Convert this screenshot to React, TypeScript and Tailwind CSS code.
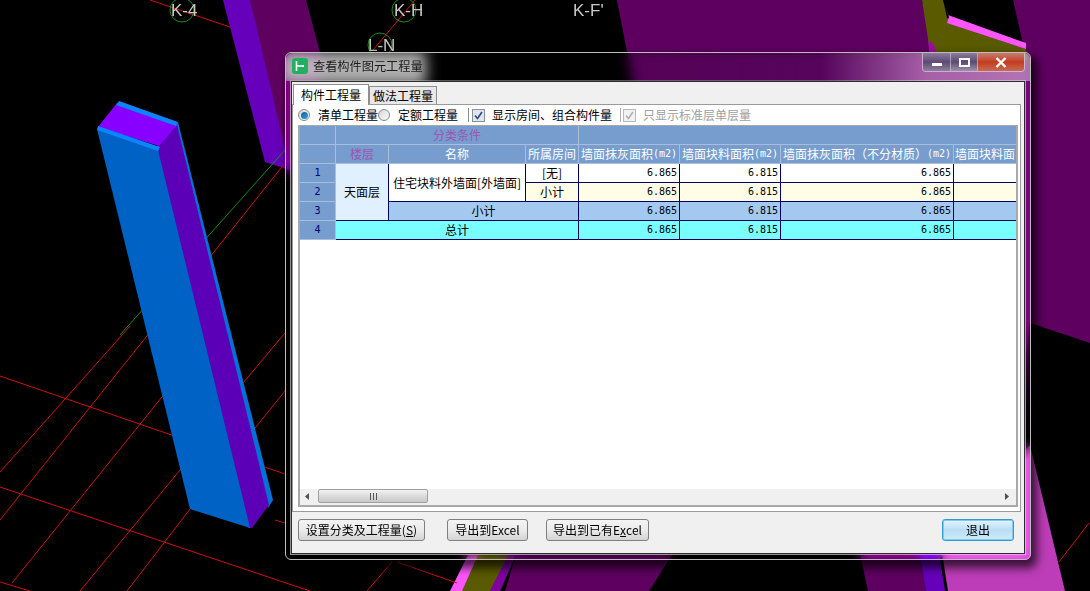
import type { ReactNode } from 'react'

const CJK = "font-['Noto_Sans_CJK_SC','Liberation_Sans',sans-serif]"
const NUM = "font-['DejaVu_Sans_Mono',monospace] text-[10px]"

const redLines = [
  [150, 0, 230, 27], [415, 0, 373, 50],
  [0, 376, 285, 474], [0, 487, 310, 591],
  [0, 472, 130, 326], [0, 520, 285, 163],
  [12, 583, 170, 387], [80, 591, 190, 458],
  [127, 591, 190, 509], [243, 383, 285, 333],
  [255, 428, 285, 391], [275, 520, 285, 523],
  [0, 582, 30, 591], [367, 591, 392, 562],
  [397, 562, 457, 583], [1089, 523, 1059, 562],
]

function Scene() {
  return (
    <svg className="absolute inset-0" width="1090" height="591" viewBox="0 0 1090 591">
      {/* 背景构件 */}
      <polygon points="250,0 306,0 322,60 300,175 283,168" fill="#5e0060" />
      <polygon points="223,0 250,0 290,170 265,162" fill="#6600bb" />
      <polygon points="617,0 922,0 932,52 1025,52 1013,0 1090,0 1090,343 1030,323 1000,560 640,120" fill="#5e0060" />
      <polygon points="922,0 943,0 947,18 1025,45 1028,60 930,52" fill="#5a5a00" />
      <polygon points="942,0 948,15 1026,43 1026,49 947,23 949,17" fill="#ff55ff" />
      <polygon points="928,41 933,43 940,60 930,60" fill="#9a109a" />
      <polygon points="1030,445 1065,591 948,591 940,540" fill="#bd3db8" />
      <polygon points="857,540 917,540 926,591 868,591" fill="#5e0060" />
      <polygon points="917,540 937,540 945,591 926,591" fill="#6600bb" />
      <polygon points="516,555 672,555 649,591 505,591" fill="#5e0060" />
      <polygon points="505,555 516,555 500,591 490,591" fill="#8000a0" />
      <polygon points="476,555 508,555 490,591 460,591" fill="#5a5a00" />
      <polygon points="468,555 478,555 462,591 450,591" fill="#ff55ff" />
      {redLines.map(([x1, y1, x2, y2], i) => (
        <line key={i} x1={x1} y1={y1} x2={x2} y2={y2} stroke="#d01010" strokeWidth="1" />
      ))}
      <line x1="120" y1="335" x2="285" y2="150" stroke="#1c8a1c" strokeWidth="1" />
      <circle cx="182" cy="10" r="12" fill="none" stroke="#1c8a1c" />
      <circle cx="404" cy="10" r="12" fill="none" stroke="#1c8a1c" />
      <circle cx="380" cy="45" r="12" fill="none" stroke="#1c8a1c" />
      {/* 蓝色墙体 */}
      <polygon points="178,122 273,500 268,508 174,126" fill="#0072d8" />
      <polygon points="155,148 177,125 269,505 252,528 248,528" fill="#5c00b8" />
      <polygon points="97,129 158,150 250,528 190,509" fill="#0062c4" />
      <polygon points="117,103 178,124 159,146 98,127" fill="#8800ff" />
      <polygon points="119,101 178,122 176,126 116,105" fill="#0a84ff" />
      <polygon points="98,126 160,147 158,151 97,130" fill="#0a84ff" />
    </svg>
  )
}

function GridLabel({ x, y, text }: { x: string; y: string; text: string }) {
  return (
    <span className={`absolute font-['Liberation_Sans',sans-serif] text-[17px] leading-none text-[#c8c8c8] ${x} ${y}`}>
      {text}
    </span>
  )
}

function Radio({ on }: { on?: boolean }) {
  return (
    <span className="flex h-[12px] w-[12px] shrink-0 items-center justify-center rounded-full border border-[#8a8a8a] bg-gradient-to-br from-[#d8d8d8] to-[#fafafa]">
      {on && <span className="h-[7px] w-[7px] rounded-full bg-gradient-to-br from-[#0f5d94] to-[#3aa2dc]" />}
    </span>
  )
}

function Check({ disabled }: { disabled?: boolean }) {
  return (
    <span
      className={`flex h-[13px] w-[13px] shrink-0 items-center justify-center border ${
        disabled ? 'border-[#b8b8b8] bg-[#f2f2f2]' : 'border-[#8e8f8f] bg-[#dfe6f0]'
      }`}
    >
      <svg width="9" height="9" viewBox="0 0 9 9" fill="none">
        <path d="M1 4.5 L3.5 7.5 L8 1" stroke={disabled ? '#b0b0b0' : '#2c4a80'} strokeWidth="1.6" />
      </svg>
    </span>
  )
}

function Head({ className = '', purple, children }: { className?: string; purple?: boolean; children?: ReactNode }) {
  return (
    <div className={`flex items-center justify-center overflow-hidden whitespace-nowrap border-b border-[#a8bedb] bg-[#769dcd] ${purple ? 'text-[#9c55b5]' : 'text-white'} ${className}`}>
      {children}
    </div>
  )
}

function RowNo({ n }: { n: number }) {
  return (
    <div className={`flex items-center justify-center border-r border-b border-[#a8bedb] bg-[#769dcd] text-[#000070] ${NUM}`}>{n}</div>
  )
}

function Cell({ className = '', children }: { className?: string; children?: ReactNode }) {
  return (
    <div className={`flex items-center justify-center overflow-hidden whitespace-nowrap border-r border-b border-[#000060] text-black ${className}`}>
      {children}
    </div>
  )
}

function Nums({ bg }: { bg: string }) {
  const vals = ['6.865', '6.815', '6.865']
  return (
    <>
      {vals.map((v, i) => (
        <div key={i} className={`flex items-center justify-end border-r border-b border-[#000060] pr-[2px] text-black ${NUM} ${bg}`}>
          {v}
        </div>
      ))}
      <div className={`border-b border-[#000060] ${bg}`} />
    </>
  )
}

function Unit() {
  return <span className={NUM}>(m2)</span>
}

function Table() {
  return (
    <div className="grid grid-cols-[36px_53px_137px_53px_101px_101px_173px_62px] grid-rows-[repeat(6,19px)] text-[12px] leading-none">
      <Head className="border-r border-r-[#a8bedb]" />
      <Head purple className="col-span-3 border-r border-r-[#a8bedb]">分类条件</Head>
      <Head className="col-span-4" />

      <Head className="border-r border-r-[#a8bedb]" />
      <Head purple className="border-r border-r-[#a8bedb]">楼层</Head>
      <Head className="border-r border-r-[#a8bedb]">名称</Head>
      <Head className="border-r border-r-[#a8bedb]">所属房间</Head>
      <Head className="border-r border-r-[#a8bedb]">墙面抹灰面积<Unit /></Head>
      <Head className="border-r border-r-[#a8bedb]">墙面块料面积<Unit /></Head>
      <Head className="border-r border-r-[#a8bedb]">墙面抹灰面积（不分材质）<Unit /></Head>
      <Head className="justify-start pl-[1px]">墙面块料面</Head>

      <RowNo n={1} />
      <Cell className="row-span-3 bg-[#e0f0ff]">天面层</Cell>
      <Cell className="row-span-2 bg-white">住宅块料外墙面[外墙面]</Cell>
      <Cell className="bg-white">[无]</Cell>
      <Nums bg="bg-white" />

      <RowNo n={2} />
      <Cell className="bg-[#fffde6]">小计</Cell>
      <Nums bg="bg-[#fffde6]" />

      <RowNo n={3} />
      <Cell className="col-span-2 bg-[#a3c9f0]">小计</Cell>
      <Nums bg="bg-[#a3c9f0]" />

      <RowNo n={4} />
      <Cell className="col-span-3 bg-[#7affff]">总计</Cell>
      <Nums bg="bg-[#7affff]" />
    </div>
  )
}

function ScrollBar() {
  return (
    <div className="flex h-[16px] items-start bg-[#f0f0f0] pl-[5px]">
      <svg className="mt-[4px]" width="5" height="7" viewBox="0 0 5 7">
        <path d="M4 0 L0 3.5 L4 7 Z" fill="#505050" />
      </svg>
      <div className="ml-[8px] flex h-[14px] w-[110px] items-center justify-center rounded-[2px] border border-[#a0a0a0] bg-gradient-to-b from-[#f2f2f2] via-[#dcdcdc] to-[#c8c8c8]">
        <span className="relative h-[7px] w-[7px] border-x border-[#555] after:absolute after:left-[2px] after:top-0 after:h-[7px] after:w-px after:bg-[#555]" />
      </div>
      <svg className="ml-auto mr-[6px] mt-[4px]" width="5" height="7" viewBox="0 0 5 7">
        <path d="M0 0 L4 3.5 L0 7 Z" fill="#505050" />
      </svg>
    </div>
  )
}

function Btn({ className = '', primary, children }: { className?: string; primary?: boolean; children: ReactNode }) {
  return (
    <button
      type="button"
      className={`flex h-[22px] items-center justify-center rounded-[3px] border text-[12px] leading-none text-black ${
        primary
          ? 'border-[#2f9ccf] bg-gradient-to-b from-[#e6f5fd] via-[#b8def5] to-[#d0ebfa] shadow-[inset_0_0_0_1px_#7fcbee]'
          : 'border-[#7f7f7f] bg-gradient-to-b from-[#f4f4f4] via-[#ebebeb] to-[#d4d4d4]'
      } ${className}`}
    >
      {children}
    </button>
  )
}

function Caption() {
  return (
    <div className="relative flex h-[28px] shrink-0 items-start overflow-hidden rounded-t-[6px] bg-[linear-gradient(90deg,rgba(0,0,0,0.4)_40%,rgba(20,10,30,0.45)_72%,rgba(190,190,190,0.5)_86%,rgba(210,210,210,0.55)_100%)]">
      <div className="absolute left-[-6px] top-[-2px] h-[34px] w-[146px] bg-[#cfcfcf]/85 blur-[7px]" />
      <div className="relative ml-[6px] mt-[5px] flex h-[16px] w-[16px] items-center justify-center rounded-[3px] bg-[#22b060]">
        <svg width="12" height="12" viewBox="0 0 12 12" fill="none" stroke="#fff" strokeWidth="1.6">
          <path d="M2.5 1 V11 M2.5 6 H9" />
          <path d="M9 5 V7" strokeWidth="2" />
        </svg>
      </div>
      <span className="relative ml-[5px] mt-[5px] text-[12.2px] leading-[16px] text-[#1c1c1c]">查看构件图元工程量</span>
      <div className="relative ml-auto mr-[5px] flex h-[19px] overflow-hidden rounded-b-[4px] border border-t-0 border-[#d8d0de]/70">
        <div className="flex w-[28px] items-center justify-center border-r border-[#d8d0de]/60 bg-gradient-to-b from-[#8b7c9c] via-[#5e4a74] to-[#8e8098]">
          <span className="mt-[4px] h-[3px] w-[10px] bg-white" />
        </div>
        <div className="flex w-[27px] items-center justify-center border-r border-[#d8d0de]/60 bg-gradient-to-b from-[#8b7c9c] via-[#5e4a74] to-[#9d92a8]">
          <span className="h-[9px] w-[11px] border-2 border-white" />
        </div>
        <div className="flex w-[46px] items-center justify-center bg-gradient-to-b from-[#c87a70] via-[#c23c1e] to-[#c86a50]">
          <svg width="12" height="11" viewBox="0 0 12 11" stroke="#fff" strokeWidth="2.4">
            <path d="M1.5 1 L10.5 10 M10.5 1 L1.5 10" />
          </svg>
        </div>
      </div>
    </div>
  )
}

export default function App() {
  return (
    <div className={`relative h-[591px] w-[1090px] overflow-hidden bg-black ${CJK}`}>
      <Scene />
      <GridLabel x="left-[171px]" y="top-[2px]" text="K-4" />
      <GridLabel x="left-[394px]" y="top-[2px]" text="K-H" />
      <GridLabel x="left-[573px]" y="top-[2px]" text="K-F'" />
      <GridLabel x="left-[368px]" y="top-[37px]" text="L-N" />

      {/* 弹窗 */}
      <div className="absolute left-[285px] top-[52px] flex h-[508px] w-[746px] flex-col rounded-[6px] border border-[#bdbdbd] shadow-[4px_6px_10px_2px_rgba(0,0,0,0.7)] backdrop-blur-[6px] backdrop-brightness-150">
        <Caption />
        <div className="ml-[5px] mr-[5px] mb-[5px] flex flex-1 flex-col border border-[#2c2c2c] bg-[#f0f0f0] outline outline-[#d0d0d0]/70">
          <div className="flex h-[22px] shrink-0 items-end pl-[1px] text-[12px] leading-none text-black">
            <div className="relative z-10 -mb-px flex h-[21px] w-[76px] items-center justify-center border border-b-0 border-[#8e8e8e] bg-white">构件工程量</div>
            <div className="flex h-[18px] w-[68px] items-center justify-center border border-b-0 border-[#8e8e8e] bg-[#e8e8e8]">做法工程量</div>
          </div>

          <div className="mr-[3px] flex flex-1 flex-col border border-[#9a9a9a] bg-white">
            <div className="flex h-[20px] shrink-0 items-center pl-[5px] text-[12px] leading-none text-black">
              <Radio on />
              <span className="ml-[8px] w-[60px]">清单工程量</span>
              <Radio />
              <span className="ml-[8px] w-[60px]">定额工程量</span>
              <span className="ml-[10px] h-[14px] w-px bg-[#8a8a8a]" />
              <span className="ml-[3px]"><Check /></span>
              <span className="ml-[7px]">显示房间、组合构件量</span>
              <span className="ml-[8px] h-[14px] w-px bg-[#b0b0b0]" />
              <span className="ml-[2px]"><Check disabled /></span>
              <span className="ml-[7px] text-[#a0a0a0]">只显示标准层单层量</span>
            </div>
            <div className="ml-[5px] mr-[2px] mb-[4px] flex flex-1 flex-col border-x-2 border-t border-b-2 border-[#a8a8a8] bg-white">
              <div className="flex-1">
                <Table />
              </div>
              <ScrollBar />
            </div>
          </div>

          <div className="flex h-[41px] shrink-0 items-start pl-[6px] pr-[10px] pt-[7px]">
            <Btn className="w-[127px]">设置分类及工程量(<span className="underline">S</span>)</Btn>
            <Btn className="ml-[22px] w-[81px]">导出到Excel</Btn>
            <Btn className="ml-[18px] w-[103px]">导出到已有E<span className="underline">x</span>cel</Btn>
            <Btn primary className="ml-auto w-[72px]">退出</Btn>
          </div>
        </div>
      </div>
    </div>
  )
}
